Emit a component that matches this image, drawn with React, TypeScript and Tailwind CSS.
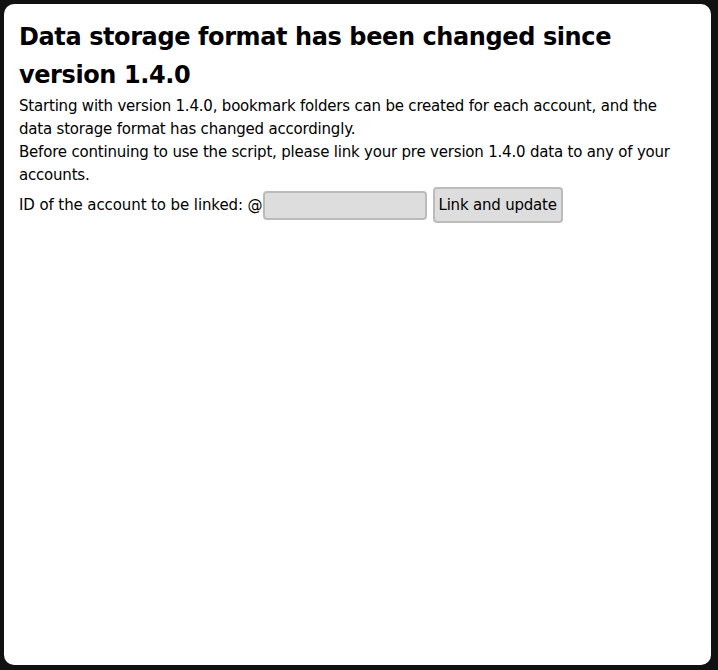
import React from 'react';

const App: React.FC = () => {
  return (
    <div className="h-[670px] w-[718px] bg-[#111] p-[4px] pr-[7px] pb-[5px] font-['Verdana','DejaVu_Sans',sans-serif] text-black">
      <div className="h-full w-full rounded-[10px] bg-white pl-[15px] pr-[22px] pt-[14px]">
        <h1 className="text-[24px] font-bold leading-[38px] tracking-[-0.4px]">
          Data storage format has been changed since version 1.4.0
        </h1>
        <p className="mt-[1px] text-[15px] leading-[23px] tracking-[-0.2px]">
          Starting with version 1.4.0, bookmark folders can be created for each account, and the data storage format has changed accordingly.
          <br />
          Before continuing to use the script, please link your pre version 1.4.0 data to any of your accounts.
        </p>
        <div className="flex items-center text-[15px] tracking-[-0.1px]">
          <span>ID of the account to be linked: @</span>
          <input
            type="text"
            className="h-[29px] w-[164px] rounded-[4px] border-2 border-[#bbb] bg-[#ddd] outline-none"
          />
          <button className="ml-[6px] h-[36px] rounded-[4px] border-2 border-[#bbb] bg-[#ddd] px-[4px] tracking-[-0.2px]">
            Link and update
          </button>
        </div>
      </div>
    </div>
  );
};

export default App;
